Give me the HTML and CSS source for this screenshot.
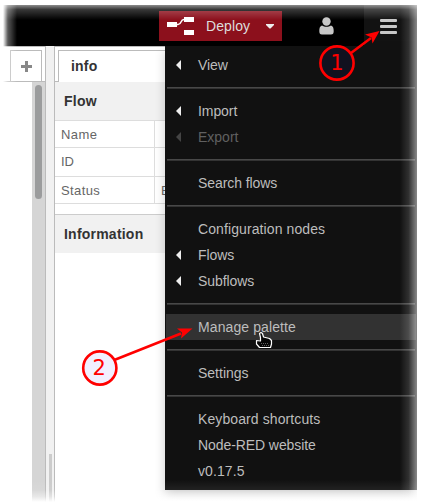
FILE: index.html
```html
<!DOCTYPE html>
<html lang="en">
<head>
<meta charset="utf-8">
<title>Node-RED</title>
<link rel="stylesheet" href="styles.css">
</head>
<body>
<div class="editor">
  <header class="header">
    <button class="deploy">
      <svg class="deploy-icon" width="28" height="20" viewBox="0 0 28 20"><path d="M9 8.500H11C15 8.500 13 3.500 17 3.500H19" fill="none" stroke="#fff" stroke-width="1.500"/><path d="M0 6h10v5H0zM17 1h10v5H17zM17 14h10v5H17z" fill="#fff"/></svg>
      <span class="deploy-label">Deploy</span>
      <svg width="8" height="5" viewBox="0 0 8 5"><path d="M0 0H8V1L4.500 4.500H3.500L0 1z" fill="#eee"/></svg>
    </button>
    <svg class="user" width="15" height="18" viewBox="0 0 15 18"><path d="M3 8.500C1 9 .3 11 .3 14C.3 16.500 1 17.500 3 17.500H12C14 17.500 14.700 16.500 14.700 14C14.700 11 14 9 12 8.500C9.500 10.200 5.500 10.200 3 8.500z" fill="#c7c7c7"/><circle cx="7.500" cy="4.500" r="4.200" fill="#c7c7c7"/></svg>
    <div class="menu-button"><i></i><i></i><i></i></div>
  </header>
  <main class="body">
    <section class="workspace">
      <div class="tabs"><div class="add-tab"><svg width="11" height="11" viewBox="0 0 11 11"><path d="M4 0h3V4h4v3H7v4H4V7H0V4H4z" fill="#888"/></svg></div></div>
      <div class="canvas"><div class="scrollbar"><div class="thumb"></div></div></div>
    </section>
    <div class="separator"><div class="grip"></div></div>
    <aside class="sidebar">
      <div class="side-tabs"><div class="side-tab">info</div></div>
      <h2 class="heading">Flow</h2>
      <div class="row"><span class="key">Name</span><span class="value"></span></div>
      <div class="row row-tall"><span class="key key-id">ID</span><span class="value"></span></div>
      <div class="row"><span class="key">Status</span><span class="value">E</span></div>
      <h2 class="heading heading-info">Information</h2>
    </aside>
  </main>
  <nav class="menu">
    <div class="item sub tight"><span>View</span></div>
    <hr>
    <div class="item sub tight"><span>Import</span></div>
    <div class="item sub disabled"><span>Export</span></div>
    <hr>
    <div class="item tight"><span>Search flows</span></div>
    <hr>
    <div class="item loose"><span>Configuration nodes</span></div>
    <div class="item sub tight"><span>Flows</span></div>
    <div class="item sub tight"><span>Subflows</span></div>
    <hr>
    <div class="item active loose"><span>Manage palette</span></div>
    <hr>
    <div class="item"><span>Settings</span></div>
    <hr>
    <div class="item loose"><span>Keyboard shortcuts</span></div>
    <div class="item tight"><span>Node-RED website</span></div>
    <div class="item loose"><span>v0.17.5</span></div>
  </nav>
</div>
<div class="fade fade-top"></div>
<div class="fade fade-left"></div>
<div class="fade fade-right"></div>
<div class="fade fade-bottom"></div>
<svg class="notes" width="421" height="503" viewBox="0 0 421 503">
  <g stroke="#f00" stroke-width="2.600">
    <path d="M351 53L371 38M113 360.500L181 333.500"/>
    <circle cx="337" cy="63" r="16.600" fill="#11111f"/>
    <circle cx="99.800" cy="368" r="16.600" fill="#f1f0ff"/>
  </g>
  <path d="M379.500 31L372.500 43.500L371.500 37.500L365 34.500zM192.500 328.500L181 338.500L182 332.500L177 328.500z" fill="#f00"/>
  <text class="num" x="337" y="70">1</text>
  <text class="num" x="99.300" y="375">2</text>
  <path d="M259.500 333.500L261 332.500L262.500 333.500L263.500 337L269.500 338.500L271.500 340.500V344L270.500 347.500H259.500L256.500 344V340.500L260.500 341V337.500z" fill="#080808" stroke="#fff" stroke-width="1.200" stroke-linejoin="round"/>
  <path d="M261 343.500h8M262 345.500h7" stroke="#777" stroke-dasharray="1 1" stroke-width=".800"/>
</svg>
</body>
</html>
```
FILE: styles.css
```css
* { box-sizing: border-box; }
body {
  margin: 0;
  padding: 5px 4px 1px 3px;
  width: 421px;
  height: 503px;
  overflow: hidden;
  position: relative;
  background: #fff;
  font: 14px/20px "Liberation Sans", Arial, sans-serif;
}
.editor { position: relative; height: 497px; display: flex; flex-direction: column; overflow: hidden; }
.header { height: 41px; background: #000; display: flex; justify-content: flex-end; flex: none; }
.deploy {
  width: 123px;
  height: 30px;
  margin: 6px 37px 0 0;
  padding: 0 8px;
  border: 0;
  background: #8c101c;
  color: #ddd;
  font: inherit;
  display: flex;
  align-items: center;
}
.deploy-label { margin: 0 auto 0 11px; letter-spacing: .1px; }
.user { margin: 12px 30px 0 0; }
.menu-button { width: 53px; padding: 14px 0 0 16px; background: #121212; display: flex; flex-direction: column; gap: 3px; }
.menu-button i { display: block; width: 17px; height: 3px; border-radius: 1px; background: #c7c7c7; }
.body { flex: 1; display: flex; }
.workspace { width: 43px; border-right: 1px solid #bbb; border-top: 1px solid #bbb; display: flex; flex-direction: column; }
.tabs { height: 35px; padding: 3px 3px 0 7px; border-bottom: 1px solid #bbb; }
.add-tab { height: 31px; border: 1px solid #bbb; border-bottom: 0; display: flex; align-items: center; justify-content: center; }
.canvas { flex: 1; display: flex; justify-content: flex-end; }
.scrollbar { width: 13px; background: #d5d5d5; padding: 3px; }
.thumb { width: 7px; height: 114px; border-radius: 4px; background: #9b9c9d; }
.separator { width: 8px; background: #f1f1f1; display: flex; align-items: flex-end; justify-content: center; }
.grip { width: 3px; height: 48px; background: #ccc; }
.sidebar { flex: 1; border-left: 1px solid #bbb; border-top: 1px solid #bbb; color: #666; background: #fff; }
.side-tabs { height: 35px; padding: 3px 0 0 3px; background: linear-gradient(#bbb, #bbb) 0 34px / 4px 1px no-repeat; }
.side-tab { height: 32px; border: solid #bbb; border-width: 1px 0 0 1px; padding: 5px 0 0 12px; font-weight: bold; color: #333; letter-spacing: .2px; }
.heading { margin: 0; height: 39px; padding: 9px 9px 0; font-size: 14px; line-height: 20px; letter-spacing: .22px; color: #333; background: #f1f1f1; border-bottom: 1px solid #ddd; }
.heading-info { margin-top: 10px; border-top: 1px solid #ccc; border-bottom: 0; }
.row { height: 27px; display: flex; border-bottom: 1px solid #ddd; font-size: 13px; line-height: 27px; letter-spacing: .4px; }
.row-tall { height: 29px; }
.key { width: 100px; padding-left: 6px; border-right: 1px solid #ddd; }
.key-id { letter-spacing: 0; }
.value { padding-left: 6px; }
.menu {
  position: absolute;
  left: 162px;
  top: 41px;
  width: 252px;
  height: 444px;
  padding: 6px 1px;
  background: #111;
  color: #bdbdbd;
  box-shadow: 0 5px 10px rgba(0, 0, 0, .2);
}
.item { height: 26px; line-height: 26px; padding-left: 32px; display: flex; align-items: center; white-space: nowrap; }
.tight { letter-spacing: -.08px; }
.loose { letter-spacing: .1px; }
.sub { padding-left: 10px; }
.sub::before { content: ""; width: 5px; height: 10px; margin-right: 17px; background: #eee; clip-path: polygon(100% 0, 100% 100%, 0 50%); }
.disabled { color: #606060; }
.disabled::before { background: #444; }
.active { background: #323232; }
.menu hr { height: 2px; margin: 9px 1px; border: 0; background: linear-gradient(#484848 50%, #333 50%); }
.fade { position: absolute; pointer-events: none; }
.fade-top { left: 0; top: 5px; width: 417px; height: 15px; background: linear-gradient(rgba(255,255,255,.55), rgba(255,255,255,.22) 30%, transparent); }
.fade-left { left: 3px; top: 5px; width: 14px; height: 497px; background: linear-gradient(90deg, #fff, rgba(255,255,255,.35) 35%, transparent); }
.fade-right { left: 400px; top: 5px; width: 17px; height: 497px; background: linear-gradient(90deg, transparent, rgba(255,255,255,.13) 50%, rgba(255,255,255,.5)); }
.fade-bottom { left: 3px; top: 480px; width: 414px; height: 22px; background: linear-gradient(transparent, rgba(255,255,255,.07) 45%, rgba(255,255,255,.45) 75%, #fff); }
.notes { position: absolute; left: 0; top: 0; }
.num { font: 21px "DejaVu Sans", sans-serif; fill: #f00; text-anchor: middle; }
```
